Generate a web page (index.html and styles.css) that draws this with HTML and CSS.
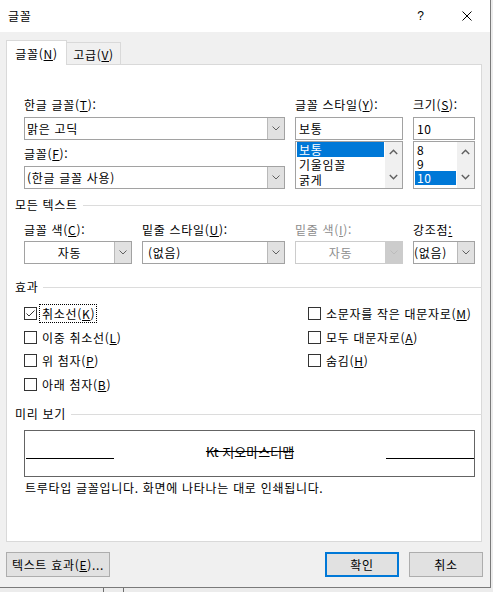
FILE: index.html
```html
<!DOCTYPE html>
<html lang="ko">
<head>
<meta charset="utf-8">
<title>글꼴</title>
<link rel="stylesheet" href="styles.css">
</head>
<body>
<div class="dialog">
  <div class="titlebar">
    <span class="title">글꼴</span>
    <span class="tb-btn help">?</span>
    <span class="tb-btn close"><svg width="10" height="10" viewBox="0 0 10 10"><path d="M0.5 0.5L9.5 9.5M9.5 0.5L0.5 9.5" stroke="#000" stroke-width="1" fill="none"/></svg></span>
  </div>
  <div class="content">
    <div class="tabs">
      <div class="tab active">글꼴(<u>N</u>)</div>
      <div class="tab">고급(<u>V</u>)</div>
    </div>
    <div class="panel">
      <div class="grid row1">
        <div class="cell span2">
          <div class="lbl">한글 글꼴(<u>T</u>):</div>
          <div class="combo mt4"><span class="field">맑은 고딕</span><span class="drop"><svg width="8" height="5" viewBox="0 0 8 5"><polyline points="0.5,0.5 4,4 7.5,0.5" fill="none" stroke="#606060" stroke-width="1"/></svg></span></div>
          <div class="lbl mt6">글꼴(<u>F</u>):</div>
          <div class="combo mt4"><span class="field">(한글 글꼴 사용)</span><span class="drop"><svg width="8" height="5" viewBox="0 0 8 5"><polyline points="0.5,0.5 4,4 7.5,0.5" fill="none" stroke="#606060" stroke-width="1"/></svg></span></div>
        </div>
        <div class="cell">
          <div class="lbl">글꼴 스타일(<u>Y</u>):</div>
          <div class="textbox mt4">보통</div>
          <div class="list mt1">
            <div class="items">
              <div class="item sel">보통</div>
              <div class="item">기울임꼴</div>
              <div class="item">굵게</div>
            </div>
            <div class="scroll">
              <svg width="9" height="6" viewBox="0 0 9 6"><polyline points="0.8,5 4.5,1.2 8.2,5" fill="none" stroke="#606060" stroke-width="1.4"/></svg>
              <svg width="9" height="6" viewBox="0 0 9 6"><polyline points="0.8,1 4.5,4.8 8.2,1" fill="none" stroke="#606060" stroke-width="1.4"/></svg>
            </div>
          </div>
        </div>
        <div class="cell">
          <div class="lbl">크기(<u>S</u>):</div>
          <div class="textbox mt4">10</div>
          <div class="list mt1">
            <div class="items size">
              <div class="item">8</div>
              <div class="item">9</div>
              <div class="item sel">10</div>
            </div>
            <div class="scroll">
              <svg width="9" height="6" viewBox="0 0 9 6"><polyline points="0.8,5 4.5,1.2 8.2,5" fill="none" stroke="#606060" stroke-width="1.4"/></svg>
              <svg width="9" height="6" viewBox="0 0 9 6"><polyline points="0.8,1 4.5,4.8 8.2,1" fill="none" stroke="#606060" stroke-width="1.4"/></svg>
            </div>
          </div>
        </div>
      </div>

      <div class="section s1"><span>모든 텍스트</span><i class="rule"></i></div>

      <div class="grid row2">
        <div class="cell">
          <div class="lbl">글꼴 색(<u>C</u>):</div>
          <div class="combo mt3"><span class="field center">자동</span><span class="drop"><svg width="8" height="5" viewBox="0 0 8 5"><polyline points="0.5,0.5 4,4 7.5,0.5" fill="none" stroke="#606060" stroke-width="1"/></svg></span></div>
        </div>
        <div class="cell">
          <div class="lbl">밑줄 스타일(<u>U</u>):</div>
          <div class="combo mt3"><span class="field wide">(없음)</span><span class="drop"><svg width="8" height="5" viewBox="0 0 8 5"><polyline points="0.5,0.5 4,4 7.5,0.5" fill="none" stroke="#606060" stroke-width="1"/></svg></span></div>
        </div>
        <div class="cell">
          <div class="lbl disabled">밑줄 색(<u>I</u>):</div>
          <div class="combo disabled mt3"><span class="field center">자동</span><span class="drop"><svg width="8" height="5" viewBox="0 0 8 5"><polyline points="0.5,0.5 4,4 7.5,0.5" fill="none" stroke="#bcbcbc" stroke-width="1"/></svg></span></div>
        </div>
        <div class="cell">
          <div class="lbl">강조점<u>:</u></div>
          <div class="combo mt3"><span class="field tight">(없음)</span><span class="drop"><svg width="8" height="5" viewBox="0 0 8 5"><polyline points="0.5,0.5 4,4 7.5,0.5" fill="none" stroke="#606060" stroke-width="1"/></svg></span></div>
        </div>
      </div>

      <div class="section s2"><span>효과</span><i class="rule"></i></div>

      <div class="effects">
        <div class="col">
          <div class="check"><span class="box"><svg width="11" height="11" viewBox="0 0 11 11"><polyline points="1.5,5.5 4,8 9.5,2.5" fill="none" stroke="#333" stroke-width="1"/></svg></span><span class="clabel focus">취소선(<u>K</u>)</span></div>
          <div class="check"><span class="box"></span><span class="clabel">이중 취소선(<u>L</u>)</span></div>
          <div class="check"><span class="box"></span><span class="clabel">위 첨자(<u>P</u>)</span></div>
          <div class="check"><span class="box"></span><span class="clabel">아래 첨자(<u>B</u>)</span></div>
        </div>
        <div class="col">
          <div class="check"><span class="box"></span><span class="clabel">소문자를 작은 대문자로(<u>M</u>)</span></div>
          <div class="check"><span class="box"></span><span class="clabel">모두 대문자로(<u>A</u>)</span></div>
          <div class="check"><span class="box"></span><span class="clabel">숨김(<u>H</u>)</span></div>
        </div>
      </div>

      <div class="section s3"><span>미리 보기</span><i class="rule"></i></div>

      <div class="preview">
        <i class="pv-line left"></i>
        <span class="pv-text">Kt 지오마스터맵</span>
        <i class="pv-line right"></i>
      </div>
      <div class="desc">트루타입 글꼴입니다. 화면에 나타나는 대로 인쇄됩니다.</div>
    </div>

    <div class="buttons">
      <div class="btn effects-btn">텍스트 효과(<u>E</u>)...</div>
      <div class="btn ok">확인</div>
      <div class="btn cancel">취소</div>
    </div>
  </div>
</div>
</body>
</html>
```

FILE: styles.css
```css
html, body {
  margin: 0;
  padding: 0;
}
body {
  width: 493px;
  height: 592px;
  overflow: hidden;
  background-color: #ececec;
  background-image:
    linear-gradient(to right, transparent 103px, #6e6e6e 103px, #6e6e6e 104px, transparent 104px),
    linear-gradient(to right, transparent 123px, #6e6e6e 123px, #6e6e6e 124px, transparent 124px);
  font-family: "Noto Sans CJK KR", "Noto Sans", sans-serif;
  font-size: 12px;
  line-height: 16px;
  letter-spacing: 0.7px;
  color: #000;
}
u { text-decoration: underline; text-underline-offset: 1px; }

.dialog {
  width: 491px;
  height: 588px;
  box-sizing: border-box;
  background: #f0f0f0;
  border-right: 1px solid #7a7a7a;
  border-bottom: 1px solid #7a7a7a;
}

.titlebar {
  height: 32px;
  background: #fff;
  display: flex;
  align-items: center;
}
.title {
  margin-left: 8px;
  margin-right: auto;
}
.tb-btn {
  width: 46px;
  height: 32px;
  display: flex;
  align-items: center;
  justify-content: center;
}
.help {
  font-family: "Liberation Sans", sans-serif;
  font-size: 12px;
}

.content {
  padding: 8px 7px 0 6px;
}

.tabs {
  height: 24px;
  display: flex;
  align-items: flex-start;
  position: relative;
  z-index: 1;
}
.tab {
  box-sizing: border-box;
  display: flex;
  align-items: center;
  justify-content: center;
  border: 1px solid #d9d9d9;
}
.tab.active {
  width: 61px;
  height: 25px;
  background: #fff;
  border-bottom: 0;
  padding-top: 1px;
}
.tab:not(.active) {
  width: 54px;
  height: 22px;
  margin-top: 2px;
  border-left: 0;
  border-bottom: 0;
  background: #f0f0f0;
  padding-top: 2px;
}

.panel {
  box-sizing: border-box;
  width: 476px;
  height: 478px;
  background: #fff;
  border: 1px solid #d9d9d9;
  padding: 32px 0 0 17px;
}

.grid {
  display: grid;
  grid-template-columns: 108px 143px 108px 62px;
  column-gap: 10px;
}
.span2 { grid-column: span 2; }

.lbl { height: 16px; white-space: nowrap; }
.lbl.disabled { color: #8d8d8d; }
.mt1 { margin-top: 1px; }
.mt3 { margin-top: 3px; }
.mt4 { margin-top: 4px; }
.mt6 { margin-top: 6px; }

.combo {
  box-sizing: border-box;
  height: 23px;
  border: 1px solid #a2a2a2;
  display: flex;
  background: #fff;
}
.combo .field {
  flex: 1;
  padding-left: 2px;
  line-height: 21px;
  white-space: nowrap;
  overflow: hidden;
}
.combo .field.center { text-align: center; padding-left: 0; }
.combo .field.wide { padding-left: 5px; }
.combo .field.tight { padding-left: 0; }
.combo .drop {
  width: 16px;
  background: #e1e1e1;
  border-left: 1px solid #b9b9b9;
  display: flex;
  align-items: center;
  justify-content: center;
}
.combo.disabled { border-color: #cccccc; }
.combo.disabled .field { color: #8d8d8d; }
.combo.disabled .drop { background: #cccccc; border-left-color: #cccccc; }

.textbox {
  box-sizing: border-box;
  height: 23px;
  border: 1px solid #a2a2a2;
  padding-left: 3px;
  line-height: 21px;
}

.list {
  box-sizing: border-box;
  height: 48px;
  border: 1px solid #a2a2a2;
  display: flex;
  overflow: hidden;
}
.items {
  flex: 1;
  padding: 0 1px;
}
.item {
  height: 15px;
  line-height: 15px;
  padding-left: 2px;
  white-space: nowrap;
}
.items.size .item { height: 14px; line-height: 14px; }
.items.size .item:first-child { margin-top: 1px; }
.item.sel { background: #0078d7; color: #fff; }
.scroll {
  width: 17px;
  background: #f0f0f0;
  display: flex;
  flex-direction: column;
  align-items: center;
  justify-content: space-between;
  padding: 7px 0 8px;
  box-sizing: border-box;
}

.section {
  display: flex;
  align-items: center;
  height: 16px;
  margin-left: -9px;
  width: 467px;
  white-space: nowrap;
}
.section .rule {
  flex: 1;
  height: 1px;
  background: #dcdcdc;
  margin-left: 5px;
}
.s1 { margin-top: 8px; }
.s2 { margin-top: 15px; }
.s3 { margin-top: 10px; }

.row2 { margin-top: 9px; }

.effects {
  margin-top: 7px;
  display: grid;
  grid-template-columns: 284px auto;
}
.check {
  height: 23.5px;
  display: flex;
  align-items: center;
}
.box {
  box-sizing: border-box;
  width: 13px;
  height: 13px;
  border: 1px solid #333;
  background: #fff;
  display: flex;
}
.clabel {
  margin-left: 2px;
  border: 1px solid transparent;
  padding: 0 2px;
  line-height: 17px;
  white-space: nowrap;
}
.clabel.focus { border: 1px dotted #000; padding-right: 1px; }

.preview {
  box-sizing: border-box;
  margin-top: 8px;
  width: 451px;
  height: 47px;
  border: 1px solid #646464;
  display: flex;
  align-items: flex-start;
}
.pv-line {
  width: 88px;
  height: 1px;
  background: #000;
  margin-top: 27px;
}
.pv-line.left { margin-left: 1px; }
.pv-line.right { margin-right: 0; }
.pv-text {
  flex: 1;
  text-align: center;
  font-size: 13px;
  line-height: 16px;
  letter-spacing: 0;
  margin-top: 13px;
  text-decoration: line-through;
}
.desc {
  margin-top: 3px;
  margin-left: 1px;
  white-space: nowrap;
}

.buttons {
  margin-top: 10px;
  display: flex;
}
.btn {
  box-sizing: border-box;
  height: 25px;
  background: #e1e1e1;
  border: 1px solid #adadad;
  display: flex;
  align-items: center;
  justify-content: center;
}
.effects-btn { width: 104px; margin-right: auto; }
.ok { width: 74px; border: 2px solid #0078d7; }
.cancel { width: 74px; margin-left: 10px; }
```
